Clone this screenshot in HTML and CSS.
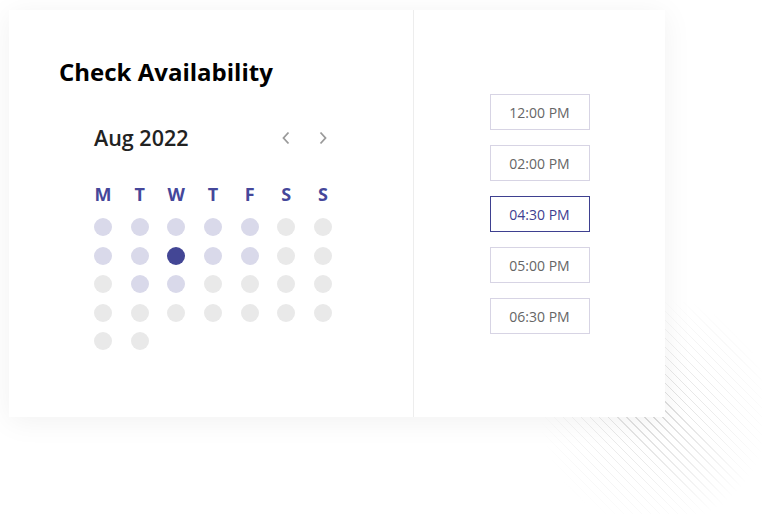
FILE: index.html
```html
<!DOCTYPE html>
<html lang="en">
<head>
    <meta charset="UTF-8">
    <meta name="viewport" content="width=device-width, initial-scale=1.0">
    <title>Check Availability</title>
    <link rel="stylesheet" href="styles.css">
</head>
<body>
    <div class="card">
        <div class="left">
            <h2 class="title">Check Availability</h2>

            <div class="calendar">
                <div class="cal-head">
                    <span class="month">Aug 2022</span>
                    <div class="nav">
                        <span class="arrow">
                            <svg width="10" height="14" viewBox="0 0 10 14"><path d="M7.5 1.5 L2.5 7 L7.5 12.5" fill="none" stroke="#9a9a9a" stroke-width="1.8"/></svg>
                        </span>
                        <span class="arrow">
                            <svg width="10" height="14" viewBox="0 0 10 14"><path d="M2.5 1.5 L7.5 7 L2.5 12.5" fill="none" stroke="#9a9a9a" stroke-width="1.8"/></svg>
                        </span>
                    </div>
                </div>

                <div class="weekdays">
                    <span>M</span><span>T</span><span>W</span><span>T</span><span>F</span><span>S</span><span>S</span>
                </div>

                <div class="days">
                    <span class="dot open"></span><span class="dot open"></span><span class="dot open"></span><span class="dot open"></span><span class="dot open"></span><span class="dot"></span><span class="dot"></span>
                    <span class="dot open"></span><span class="dot open"></span><span class="dot selected"></span><span class="dot open"></span><span class="dot open"></span><span class="dot"></span><span class="dot"></span>
                    <span class="dot"></span><span class="dot open"></span><span class="dot open"></span><span class="dot"></span><span class="dot"></span><span class="dot"></span><span class="dot"></span>
                    <span class="dot"></span><span class="dot"></span><span class="dot"></span><span class="dot"></span><span class="dot"></span><span class="dot"></span><span class="dot"></span>
                    <span class="dot"></span><span class="dot"></span>
                </div>
            </div>
        </div>

        <div class="right">
            <div class="slot">12:00 PM</div>
            <div class="slot">02:00 PM</div>
            <div class="slot active">04:30 PM</div>
            <div class="slot">05:00 PM</div>
            <div class="slot">06:30 PM</div>
        </div>
    </div>
</body>
</html>
```

FILE: styles.css
```css
body {
    margin: 0;
    min-height: 514px;
    font-family: "Open Sans", Arial, sans-serif;
    background-color: #fff;
    background-image:
        radial-gradient(circle at 655px 412px, rgba(255, 255, 255, 0) 0, rgba(255, 255, 255, 0.4) 45px, #fff 115px),
        repeating-linear-gradient(45deg, #fff 0, #fff 5.4px, #dadada 5.4px, #dadada 6.4px);
    background-repeat: no-repeat;
}

.card {
    display: flex;
    width: 656px;
    height: 407px;
    margin: 10px 0 0 9px;
    background-color: #fff;
    box-shadow: 0 4px 28px rgba(0, 0, 0, 0.06);
}

.left {
    width: 405px;
    box-sizing: border-box;
    padding: 48px 0 0 50px;
    border-right: 1px solid #ededed;
}

.title {
    margin: 0;
    font-size: 24px;
    font-weight: 700;
    line-height: 1.2;
    color: #000;
}

.calendar {
    width: 238px;
    margin: 39px 0 0 35px;
}

.cal-head {
    display: flex;
    align-items: center;
    justify-content: space-between;
}

.month {
    font-size: 21.5px;
    font-weight: 600;
    line-height: 24px;
    color: #222;
}

.nav {
    display: flex;
    gap: 18.6px;
}

.arrow {
    display: flex;
    justify-content: center;
    width: 18px;
}

.weekdays,
.days {
    display: grid;
    grid-template-columns: repeat(7, 18px);
    column-gap: 18.67px;
    justify-items: center;
}

.weekdays {
    margin-top: 34px;
}

.weekdays span {
    font-size: 18px;
    font-weight: 700;
    line-height: 20.4px;
    color: #45479a;
}

.days {
    margin-top: 14px;
    row-gap: 10.5px;
}

.dot {
    width: 18px;
    height: 18px;
    border-radius: 50%;
    background-color: #e9e9e9;
}

.dot.open {
    background-color: #d9d9ea;
}

.dot.selected {
    background-color: #434695;
}

.right {
    flex: 1;
    display: flex;
    flex-direction: column;
    align-items: center;
    gap: 15px;
    padding-top: 84px;
}

.slot {
    width: 100px;
    height: 36px;
    box-sizing: border-box;
    border: 1px solid #d7d4e4;
    display: flex;
    align-items: center;
    justify-content: center;
    font-size: 14px;
    color: #666;
}

.slot.active {
    border-color: #3e4090;
    color: #3e4090;
}
```
